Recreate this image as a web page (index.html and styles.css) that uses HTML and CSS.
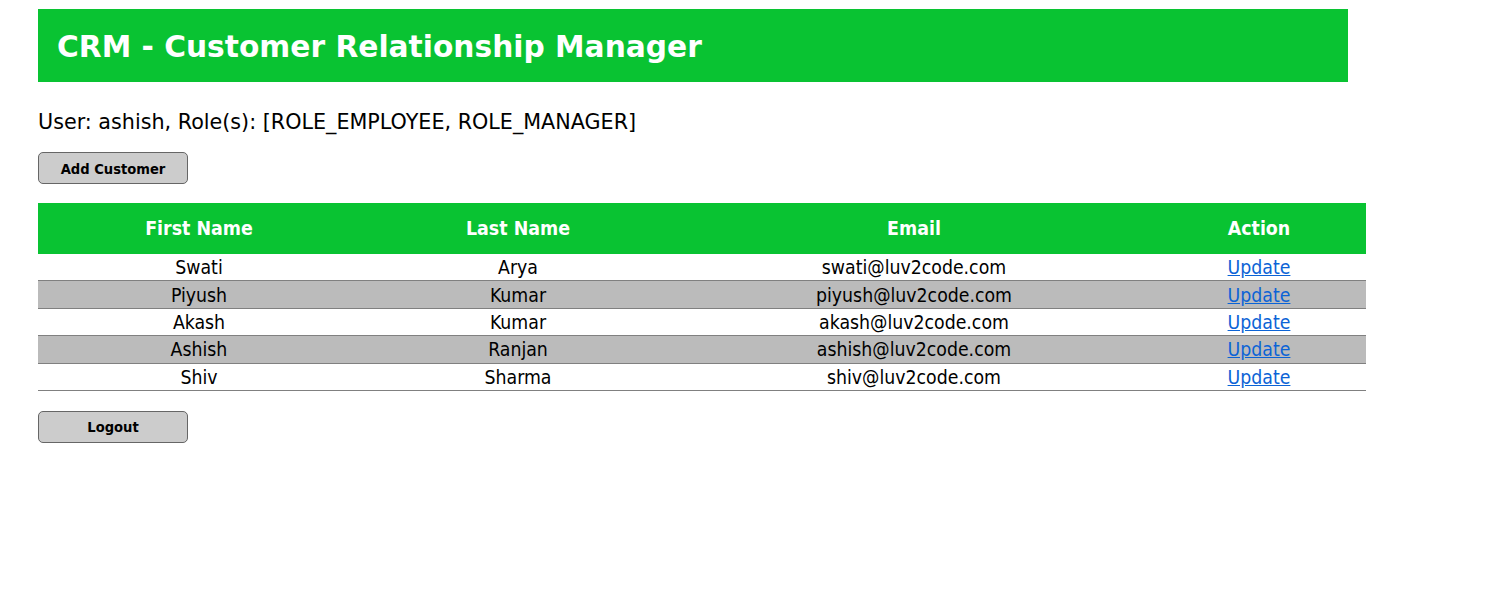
FILE: index.html
```html
<!DOCTYPE html>
<html>
<head>
<meta charset="utf-8">
<title>List Customers</title>
<link rel="stylesheet" href="styles.css">
</head>
<body>
<div class="wrapper">
  <div class="header"><h2>CRM - Customer Relationship Manager</h2></div>
  <p class="user">User: ashish, Role(s): [ROLE_EMPLOYEE, ROLE_MANAGER]</p>
  <button class="btn add-btn">Add Customer</button>
  <table class="customers">
    <thead>
      <tr><th class="c1">First Name</th><th class="c2">Last Name</th><th class="c3">Email</th><th class="c4">Action</th></tr>
    </thead>
    <tbody>
      <tr><td>Swati</td><td>Arya</td><td>swati@luv2code.com</td><td><a href="#">Update</a></td></tr>
      <tr><td>Piyush</td><td>Kumar</td><td>piyush@luv2code.com</td><td><a href="#">Update</a></td></tr>
      <tr><td>Akash</td><td>Kumar</td><td>akash@luv2code.com</td><td><a href="#">Update</a></td></tr>
      <tr><td>Ashish</td><td>Ranjan</td><td>ashish@luv2code.com</td><td><a href="#">Update</a></td></tr>
      <tr><td>Shiv</td><td>Sharma</td><td>shiv@luv2code.com</td><td><a href="#">Update</a></td></tr>
    </tbody>
  </table>
  <button class="btn logout-btn">Logout</button>
</div>
</body>
</html>
```
FILE: styles.css
```css
html, body {
  margin: 0;
  padding: 0;
  background: #fff;
  font-family: "DejaVu Sans", Verdana, sans-serif;
}
.wrapper {
  padding: 9px 0 0 38px;
}
.header {
  width: 1291px;
  height: 73px;
  background: #09c332;
  padding-left: 19px;
  display: flex;
  align-items: center;
}
.header h2 {
  margin: 0;
  padding-top: 2px;
  color: #fff;
  font-size: 29.7px;
  font-weight: bold;
}
.user {
  margin: 27px 0 0 0;
  font-size: 20.7px;
  line-height: 26px;
  color: #000;
}
.btn {
  display: block;
  width: 150px;
  height: 32px;
  border: 1px solid #666;
  border-radius: 5px;
  background: #ccc;
  font-family: "DejaVu Sans Condensed", "DejaVu Sans", sans-serif;
  font-weight: bold;
  font-size: 14.6px;
  color: #000;
  padding: 0;
}
.add-btn {
  margin-top: 17px;
}
.customers {
  margin-top: 19px;
  width: 1328px;
  border-collapse: collapse;
  table-layout: fixed;
  font-family: "DejaVu Sans Condensed", "DejaVu Sans", sans-serif;
  font-size: 19.3px;
  border-bottom: 1px solid #808080;
}
.customers th {
  background: #09c332;
  color: #fff;
  height: 51px;
  padding: 0;
  font-weight: bold;
  font-size: 19.4px;
  text-align: center;
}
.c1 { width: 322px; }
.c2 { width: 316px; }
.c3 { width: 476px; }
.c4 { width: 214px; }
.customers td {
  text-align: center;
  padding: 2px 0 0 0;
  height: 24.4px;
  line-height: 24px;
  border-top: 1px solid #808080;
}
.customers tbody tr:first-child td {
  border-top: none;
}
.customers tbody tr:nth-child(even) {
  background: #bbb;
}
.customers a {
  color: #0b63d6;
  text-decoration: underline;
}
.logout-btn {
  margin-top: 20px;
}
```
